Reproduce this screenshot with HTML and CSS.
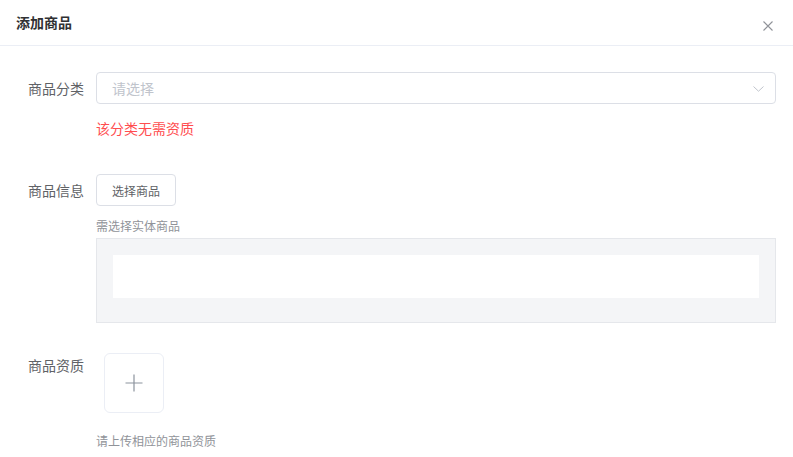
FILE: index.html
```html
<!DOCTYPE html>
<html lang="zh-CN">
<head>
<meta charset="utf-8">
<title>添加商品</title>
<link rel="stylesheet" href="styles.css">
</head>
<body>
<div class="dialog">
  <div class="dialog-header">
    <span class="dialog-title">添加商品</span>
    <svg class="close" width="10" height="10" viewBox="0 0 10 10"><path d="M0.5 0.5L9.5 9.5M9.5 0.5L0.5 9.5" stroke="#909399" stroke-width="1.1" fill="none"/></svg>
  </div>
  <div class="dialog-body">
    <div class="form-item">
      <label class="form-label">商品分类</label>
      <div class="form-content">
        <div class="select">
          <span class="placeholder">请选择</span>
          <svg class="arrow" width="11" height="6" viewBox="0 0 11 6"><path d="M0.5 0.5L5.5 5.2L10.5 0.5" stroke="#c0c4cc" stroke-width="1" fill="none"/></svg>
        </div>
        <div class="error">该分类无需资质</div>
      </div>
    </div>
    <div class="form-item item-info">
      <label class="form-label">商品信息</label>
      <div class="form-content">
        <button class="btn">选择商品</button>
        <div class="tip tip-goods">需选择实体商品</div>
        <div class="goods-box">
          <div class="goods-inner"></div>
        </div>
      </div>
    </div>
    <div class="form-item item-qual">
      <label class="form-label">商品资质</label>
      <div class="form-content">
        <div class="upload">
          <svg width="18" height="18" viewBox="0 0 18 18"><path d="M9 0.5V17.5M0.5 9H17.5" stroke="#8c939d" stroke-width="1.2" fill="none"/></svg>
        </div>
        <div class="tip tip-upload">请上传相应的商品资质</div>
      </div>
    </div>
  </div>
</div>
</body>
</html>
```
FILE: styles.css
```css
* { box-sizing: border-box; }
html, body { margin: 0; padding: 0; background: #fff; }
body {
  font-family: "Noto Sans CJK SC", "Noto Sans", "Liberation Sans", sans-serif;
  font-size: 14px;
  color: #606266;
}
.dialog { width: 793px; }
.dialog-header {
  height: 46px;
  border-bottom: 1px solid #ebeef5;
  display: flex;
  align-items: center;
  justify-content: space-between;
  padding: 0 20px 0 16px;
}
.dialog-title {
  font-size: 14px;
  font-weight: 700;
  color: #303133;
  line-height: 20px;
  margin-top: -1px;
}
.close { margin-top: 6px; }
.dialog-body { padding: 26px 17px 0 16px; }
.form-item { display: flex; align-items: flex-start; }
.form-label {
  width: 80px;
  flex: none;
  padding-right: 12px;
  text-align: right;
  line-height: 32px;
  color: #606266;
  font-size: 14px;
}
.form-content { flex: 1; min-width: 0; }
.select {
  height: 32px;
  border: 1px solid #dcdfe6;
  border-radius: 4px;
  display: flex;
  align-items: center;
  justify-content: space-between;
  padding: 0 11px 0 15px;
}
.placeholder { color: #c0c4cc; font-size: 14px; }
.arrow { margin-top: 1px; }
.error {
  color: #ff4d4f;
  font-size: 14px;
  line-height: 20px;
  margin-top: 14px;
}
.item-info { margin-top: 36px; }
.btn {
  width: 80px;
  height: 32px;
  border: 1px solid #dcdfe6;
  border-radius: 4px;
  background: #fff;
  font-family: inherit;
  font-size: 12px;
  color: #606266;
  padding: 0;
  display: block;
}
.tip {
  font-size: 12px;
  line-height: 20px;
  color: #909399;
}
.tip-goods { margin: 10px 0 2px; }
.goods-box {
  background: #f4f5f7;
  border: 1px solid #e5e7eb;
  padding: 16px 16px 24px;
}
.goods-inner { height: 43px; background: #fff; }
.item-qual { margin-top: 26px; }
.upload {
  width: 60px;
  height: 60px;
  margin: 4px 0 0 8px;
  border: 1px solid #ebeef5;
  border-radius: 6px;
  display: flex;
  align-items: center;
  justify-content: center;
}
.tip-upload { margin-top: 18px; }
```
